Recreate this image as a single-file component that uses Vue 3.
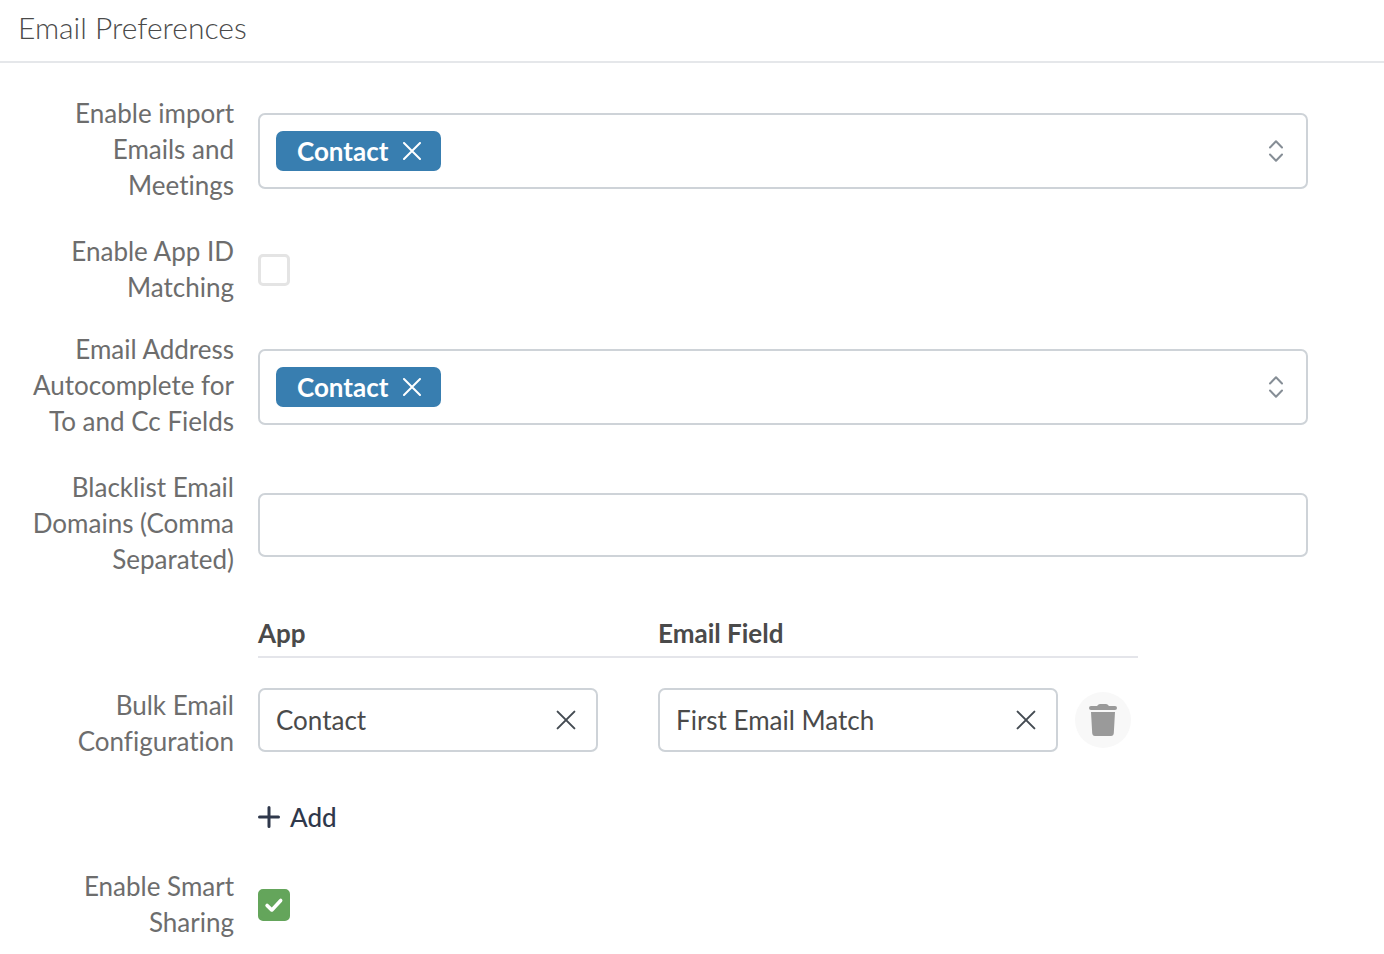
<script setup>
import { ref } from 'vue'

const importApps = ref(['Contact'])
const autocompleteApps = ref(['Contact'])
const matchAppId = ref(false)
const blacklist = ref('')
const bulkRows = ref([{ app: 'Contact', field: 'First Email Match' }])
const smartSharing = ref(true)

function addRow() {
  bulkRows.value.push({ app: '', field: '' })
}
</script>

<template>
  <main class="page">
    <header class="page-header">
      <h1>Email Preferences</h1>
    </header>

    <form class="form" @submit.prevent>
      <div class="row">
        <label class="label" for="import-apps">Enable import Emails and Meetings</label>
        <div class="multi">
          <span v-for="(app, i) in importApps" :key="app" class="chip">
            {{ app }}
            <button type="button" class="chip-remove" :aria-label="`Remove ${app}`" @click="importApps.splice(i, 1)">
              <svg width="18" height="18" viewBox="0 0 18 18"><path d="M1 1L17 17M17 1L1 17" /></svg>
            </button>
          </span>
          <input id="import-apps" class="multi-input" type="text" />
          <button type="button" class="toggle" aria-label="Show options">
            <svg width="16" height="24" viewBox="0 0 16 24"><path d="M2 8.5L8 2.3L14 8.5M2 15.5L8 21.7L14 15.5" /></svg>
          </button>
        </div>
      </div>

      <div class="row row-check">
        <label class="label" for="match-id">Enable App ID Matching</label>
        <input id="match-id" v-model="matchAppId" class="check" type="checkbox" />
      </div>

      <div class="row">
        <label class="label" for="auto-apps">Email Address Autocomplete for To and Cc Fields</label>
        <div class="multi">
          <span v-for="(app, i) in autocompleteApps" :key="app" class="chip">
            {{ app }}
            <button type="button" class="chip-remove" :aria-label="`Remove ${app}`" @click="autocompleteApps.splice(i, 1)">
              <svg width="18" height="18" viewBox="0 0 18 18"><path d="M1 1L17 17M17 1L1 17" /></svg>
            </button>
          </span>
          <input id="auto-apps" class="multi-input" type="text" />
          <button type="button" class="toggle" aria-label="Show options">
            <svg width="16" height="24" viewBox="0 0 16 24"><path d="M2 8.5L8 2.3L14 8.5M2 15.5L8 21.7L14 15.5" /></svg>
          </button>
        </div>
      </div>

      <div class="row">
        <label class="label" for="blacklist">Blacklist Email Domains (Comma Separated)</label>
        <input id="blacklist" v-model="blacklist" class="text-box" type="text" />
      </div>

      <div class="row row-bulk" role="group" aria-labelledby="bulk-label">
        <span id="bulk-label" class="label">Bulk Email Configuration</span>
        <div class="bulk">
          <table>
            <colgroup>
              <col class="col-app" />
              <col class="col-field" />
              <col class="col-action" />
            </colgroup>
            <thead>
              <tr>
                <th id="bulk-app" scope="col">App</th>
                <th id="bulk-field" scope="col">Email Field</th>
                <td></td>
              </tr>
            </thead>
            <tbody>
              <tr v-for="(row, i) in bulkRows" :key="i">
                <td class="cell-app">
                  <div class="picker">
                    <input v-model="row.app" type="text" aria-labelledby="bulk-app" />
                    <button type="button" class="clear" aria-label="Clear app" @click="row.app = ''">
                      <svg width="20" height="20" viewBox="0 0 20 20"><path d="M1.6 1.6L18.4 18.4M18.4 1.6L1.6 18.4" /></svg>
                    </button>
                  </div>
                </td>
                <td>
                  <div class="picker">
                    <input v-model="row.field" type="text" aria-labelledby="bulk-field" />
                    <button type="button" class="clear" aria-label="Clear email field" @click="row.field = ''">
                      <svg width="20" height="20" viewBox="0 0 20 20"><path d="M1.6 1.6L18.4 18.4M18.4 1.6L1.6 18.4" /></svg>
                    </button>
                  </div>
                </td>
                <td class="cell-action">
                  <button type="button" class="trash" aria-label="Delete row" @click="bulkRows.splice(i, 1)">
                    <svg width="28" height="32" viewBox="0 0 28 32">
                      <path d="M2 2H8Q9.5 0 11 0H17Q18.500 0 20 2H26Q28 2 28 4Q28 6 26 6H2Q0 6 0 4Q0 2 2 2ZM2 8H26L24.800 29Q24.600 32 22 32H6Q3.400 32 3.200 29Z" />
                    </svg>
                  </button>
                </td>
              </tr>
            </tbody>
          </table>
          <button type="button" class="add" @click="addRow">
            <svg width="22" height="22" viewBox="0 0 22 22"><path d="M11 1.500V20.500M1.500 11H20.500" /></svg>
            Add
          </button>
        </div>
      </div>

      <div class="row">
        <label class="label" for="smart">Enable Smart Sharing</label>
        <input id="smart" v-model="smartSharing" class="check" type="checkbox" />
      </div>
    </form>
  </main>
</template>

<style>
body {
  background: #fff;
}
</style>

<style scoped>
.page,
.page input,
.page button {
  font-family: Lato, "Open Sans", sans-serif;
  font-size: 26px;
  line-height: 36px;
  font-variant-ligatures: none;
  box-sizing: border-box;
}

.page {
  color: #4a4a4a;
}

button {
  display: flex;
  align-items: center;
  justify-content: center;
  margin: 0;
  padding: 0;
  border: 0;
  background: none;
  color: inherit;
  cursor: pointer;
}

svg {
  display: block;
  fill: none;
  stroke: currentColor;
  stroke-linecap: round;
  stroke-linejoin: round;
  stroke-width: 2;
}

.page-header {
  padding: 9px 18px 15px;
  border-bottom: 2px solid #e5e7ea;
}

h1 {
  margin: 0;
  font-size: 30px;
  font-weight: 300;
  line-height: 37px;
}

.form {
  display: flex;
  flex-direction: column;
  gap: 30px;
  padding: 32px 76px 14px 24px;
}

.row {
  display: grid;
  grid-template-columns: 210px minmax(0, 1fr);
  column-gap: 24px;
  align-items: center;
}

.row-check {
  margin-bottom: -4px;
}

.row-bulk {
  align-items: start;
}

.label {
  color: #6d6d6d;
  text-align: right;
}

.row-bulk .label {
  padding-top: 80px;
}

.multi,
.text-box,
.picker {
  border: 2px solid #ced3d8;
  border-radius: 7px;
  background: #fff;
}

.multi {
  display: flex;
  align-items: center;
  margin-top: 4px;
  padding: 16px 22px 16px 16px;
}

.chip {
  display: flex;
  align-items: center;
  gap: 15px;
  height: 40px;
  padding: 0 20px 0 21px;
  border-radius: 7px;
  background: #387eb0;
  color: #fff;
  font-weight: 700;
}

.multi-input,
.picker input {
  flex: 1;
  min-width: 0;
  padding: 0;
  border: 0;
  outline: 0;
  background: transparent;
  color: inherit;
}

.toggle {
  color: #868e96;
}

.text-box {
  width: 100%;
  height: 64px;
  margin: 4px 0 0;
  padding: 0 16px;
  color: inherit;
}

.check {
  appearance: none;
  display: grid;
  place-items: center;
  width: 32px;
  height: 32px;
  margin: 2px 0 0;
  border: 3px solid #e4e4e4;
  border-radius: 5px;
  background: #fff;
}

.check:checked {
  border-color: #64a55b;
  background: #64a55b;
}

.check:checked::before {
  content: "";
  width: 18px;
  height: 14px;
  background: #fff;
  clip-path: path("M0.800 6.200Q2 5 3.400 6.200L6.800 9.400L14.400 1.200Q15.800 0 17 1.200Q18 2.400 17 3.800L8.200 13.200Q6.800 14.400 5.400 13.200L0.800 8.800Q-0.400 7.400 0.800 6.200Z");
}

.bulk {
  display: flex;
  flex-direction: column;
  align-items: flex-start;
}

table {
  width: 100%;
  max-width: 880px;
  border-collapse: collapse;
  table-layout: fixed;
}

.col-action {
  width: 80px;
}

th {
  padding: 8px 0 5px;
  text-align: left;
  font-weight: 700;
}

thead tr {
  border-bottom: 2px solid #e4e5ea;
}

tbody td {
  padding: 30px 0 0;
}

tbody .cell-app {
  padding-right: 60px;
}

tbody .cell-action {
  padding-left: 17px;
}

.picker {
  display: flex;
  align-items: center;
  height: 64px;
  padding: 0 20px 0 16px;
  box-sizing: border-box;
}

.clear {
  color: #444b52;
}

.trash {
  width: 56px;
  height: 56px;
  border-radius: 50%;
  background: #f8f8f8;
  color: #9a9a9a;
}

.trash svg {
  fill: currentColor;
  stroke: none;
}

.add {
  gap: 10px;
  margin-top: 44px;
  color: #2f384b;
}

.page .add {
  height: 42px;
  font-weight: 500;
}

.add svg {
  stroke-width: 3;
}
</style>
